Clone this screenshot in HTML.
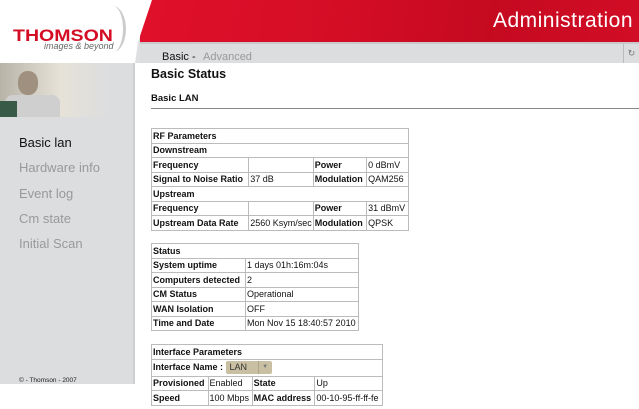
<!DOCTYPE html>
<html><head><style>
*{margin:0;padding:0;box-sizing:border-box}
body{width:639px;height:409px;overflow:hidden;background:#fff;font-family:"Liberation Sans",sans-serif;position:relative}
.hdr{position:absolute;left:0;top:0;width:639px;height:63px;background:#dfe0e2}
.red{position:absolute;left:140px;top:0;width:499px;height:42px;background:linear-gradient(100deg,#e0102a 0%,#d40d25 40%,#c50a20 70%,#d20d26 100%)}
.logo{position:absolute;left:0;top:0;width:152px;height:63px;background:#fff;clip-path:polygon(0 0,152px 0,138px 42px,135px 63px,0 63px)}
.admin{position:absolute;right:6px;top:9px;color:#fff;font-size:21px;letter-spacing:.5px}
.nav{position:absolute;left:140px;top:42px;width:499px;height:21px;background:#dcdddf;border-top:2px solid #c9c9cb}
.side{position:absolute;left:0;top:63px;width:135px;height:321px;background:#dcdddf;border-right:2px solid #cfcfd1}
.photo{position:absolute;left:0;top:63px;width:110px;height:54px;background:linear-gradient(90deg,#b9b4a8,#e6e2d8 55%,#dcdddf)}
.m{position:absolute;left:19px;font-size:13px;color:#999}
table{position:absolute;border-collapse:collapse;font-size:9px;border:1px solid #aaa}
td{border:1px solid #bbb;padding:0 1px;height:14.5px;white-space:nowrap;color:#111}
b{font-weight:bold}
</style></head><body>
<div class="hdr"></div>
<div class="red"><div class="admin">Administration</div></div>
<div class="nav"><span style="position:absolute;left:22px;top:7px;font-size:11px;color:#111">Basic -</span><span style="position:absolute;left:63px;top:7px;font-size:11px;color:#999">Advanced</span>
<div style="position:absolute;right:0;top:0;width:16px;height:19px;border-left:1px solid #bbb;font-size:9px;color:#777;text-align:center;line-height:19px">&#8635;</div></div>
<div class="logo">
<div style="position:absolute;left:13px;top:26px;color:#d40d25;font-weight:bold;font-size:17px;letter-spacing:0px;transform:scaleX(1.15);transform-origin:left">THOMSON</div>
<div style="position:absolute;left:44px;top:41px;color:#666;font-size:9px;font-style:italic">images &amp; beyond</div>
<div style="position:absolute;left:100px;top:6px;width:26px;height:46px;border-right:3px solid #ccc;border-radius:0 50% 50% 0"></div>
</div>
<div class="side"></div>
<div class="photo"><div style="position:absolute;left:18px;top:8px;width:20px;height:24px;background:#a09080;border-radius:45%"></div><div style="position:absolute;left:5px;top:32px;width:55px;height:22px;background:#cfcfd0;border-radius:8px 8px 0 0"></div><div style="position:absolute;left:0;top:38px;width:17px;height:16px;background:#3a5a48"></div></div>
<div class="m" style="top:135px;color:#111">Basic lan</div>
<div class="m" style="top:160px">Hardware info</div>
<div class="m" style="top:186px">Event log</div>
<div class="m" style="top:211px">Cm state</div>
<div class="m" style="top:236px">Initial Scan</div>
<div style="position:absolute;left:19px;top:377px;font-size:6.5px;color:#222">© - Thomson - 2007</div>
<div style="position:absolute;left:151px;top:67px;font-size:12.5px;font-weight:bold;color:#111">Basic Status</div>
<div style="position:absolute;left:151px;top:93px;font-size:9.5px;font-weight:bold;color:#111">Basic LAN</div>
<div style="position:absolute;left:151px;top:108px;width:488px;height:1px;background:#888"></div>
<table style="left:151px;top:128px;width:258px">
<tr><td colspan="4"><b>RF Parameters</b></td></tr>
<tr><td colspan="4"><b>Downstream</b></td></tr>
<tr><td><b>Frequency</b></td><td style="width:60px"></td><td><b>Power</b></td><td>0 dBmV</td></tr>
<tr><td><b>Signal to Noise Ratio</b></td><td>37 dB</td><td><b>Modulation</b></td><td>QAM256</td></tr>
<tr><td colspan="4"><b>Upstream</b></td></tr>
<tr><td><b>Frequency</b></td><td></td><td><b>Power</b></td><td>31 dBmV</td></tr>
<tr><td><b>Upstream Data Rate</b></td><td>2560 Ksym/sec</td><td><b>Modulation</b></td><td>QPSK</td></tr>
</table>
<table style="left:151px;top:243px;width:208px">
<tr><td colspan="2"><b>Status</b></td></tr>
<tr><td style="width:94px"><b>System uptime</b></td><td>1 days 01h:16m:04s</td></tr>
<tr><td><b>Computers detected</b></td><td>2</td></tr>
<tr><td><b>CM Status</b></td><td>Operational</td></tr>
<tr><td><b>WAN Isolation</b></td><td>OFF</td></tr>
<tr><td><b>Time and Date</b></td><td>Mon Nov 15 18:40:57 2010</td></tr>
</table>
<table style="left:151px;top:344px;width:232px">
<tr><td colspan="4"><b>Interface Parameters</b></td></tr>
<tr><td colspan="4" style="height:17px"><b>Interface Name :</b> <span style="display:inline-block;vertical-align:middle;width:46px;height:13px;background:#c9bfa3;border-radius:2px;font-size:9px;line-height:13px;padding-left:4px;color:#333">LAN <span style="float:right;width:14px;border-left:1px solid #b0a585;text-align:center;font-size:6px;color:#777">▼</span></span></td></tr>
<tr><td><b>Provisioned</b></td><td>Enabled</td><td><b>State</b></td><td>Up</td></tr>
<tr><td><b>Speed</b></td><td>100 Mbps</td><td><b>MAC address</b></td><td>00-10-95-ff-ff-fe</td></tr>
</table>
</body></html>
